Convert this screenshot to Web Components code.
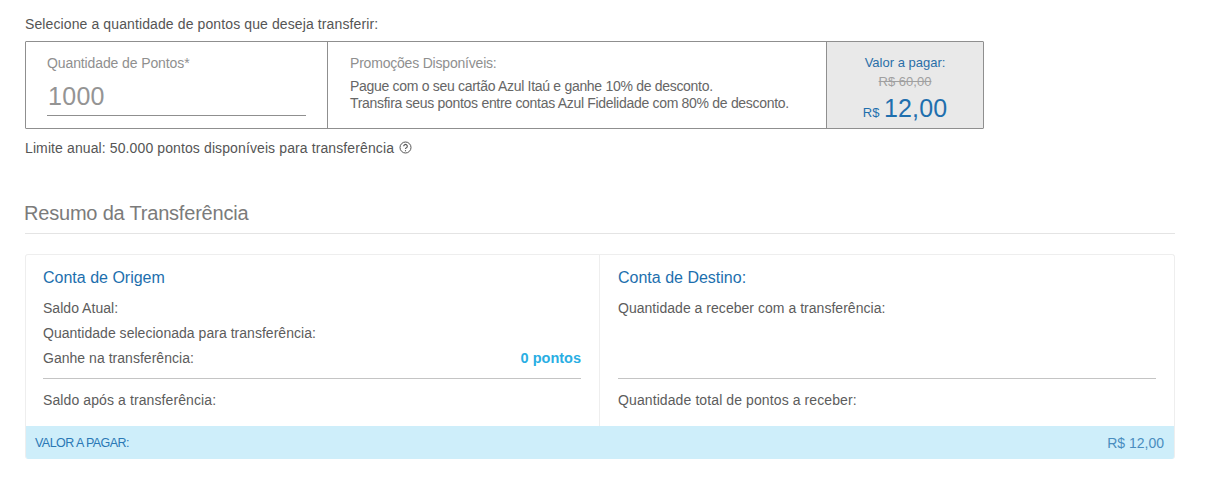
<!DOCTYPE html>
<html lang="pt"><head><meta charset="utf-8"><title>Transferência</title>
<style>html,body{margin:0;background:#fff}body{font-family:"Liberation Sans",Arial,sans-serif;color:#555}</style></head>
<body>
<transfer-page>
  <points-selector></points-selector>
  <transfer-summary></transfer-summary>
</transfer-page>
<script>
function def(name, html){
  customElements.define(name, class extends HTMLElement{
    constructor(){super();this.attachShadow({mode:'open'}).innerHTML=html;}
  });
}
def('transfer-page',`<style>:host{display:block;width:1150px;padding:16px 0 0 25px;box-sizing:content-box}</style><slot></slot>`);
def('points-selector',`<style>
:host{display:block;font-size:14px;color:#555;letter-spacing:.11px}
p{margin:0;line-height:17px}
.box{display:grid;grid-template-columns:301px 499px 1fr;width:959px;height:88px;box-sizing:border-box;border:1px solid #8f8f8f;margin-top:8px;border-radius:1px;letter-spacing:0}
.qty{padding:13px 21px 0 21px;box-sizing:border-box}
.lbl{font-size:14px;line-height:17px;color:#8f8f8f;letter-spacing:-.11px}
.promo .lbl{letter-spacing:-.2px}
.val{font-size:25px;line-height:29px;color:#949494;margin-top:10px;height:33px;border-bottom:1px solid #8f8f8f;letter-spacing:.3px;padding-left:1px}
.val span{display:block;height:29px}
.promo{border-left:1px solid #8f8f8f;padding:13px 22px 0 22px}
.promo .lines{margin-top:6px;font-size:14px;line-height:17px;color:#666;letter-spacing:-.3px}
.pay{border-left:1px solid #8f8f8f;background:#e9e9e9;text-align:center;padding-top:13px;color:#2a6fa8;box-sizing:border-box}
.pay .t{font-size:13px;line-height:16px}
.pay s{display:block;font-size:13px;line-height:16px;color:#a0a0a0;margin-top:3px}
.pay .p{font-size:13px;line-height:30px;margin-top:3px;color:#1f6fae}
.pay .p b{font-weight:400;font-size:25px;margin-left:1px;letter-spacing:.1px}
.lim{margin-top:11px;display:flex;align-items:center;gap:5px;line-height:17px}
svg{display:block;margin-top:-2px}
</style>
<p>Selecione a quantidade de pontos que deseja transferir:</p>
<div class="box">
  <div class="qty"><div class="lbl">Quantidade de Pontos*</div><div class="val"><span>1000</span></div></div>
  <div class="promo"><div class="lbl">Promoções Disponíveis:</div><div class="lines">Pague com o seu cartão Azul Itaú e ganhe 10% de desconto.<br>Transfira seus pontos entre contas Azul Fidelidade com 80% de desconto.</div></div>
  <div class="pay"><div class="t">Valor a pagar:</div><s>R$ 60,00</s><div class="p">R$ <b>12,00</b></div></div>
</div>
<div class="lim"><span>Limite anual: 50.000 pontos disponíveis para transferência</span>
<svg width="13" height="13" viewBox="0 0 13 13" fill="none" stroke="#555"><circle cx="6.5" cy="6.5" r="5.5"/><path d="M4.7 5.2a1.8 1.8 0 1 1 2.7 1.6c-.6.3-.9.6-.9 1.3" stroke-width="1.1"/><path d="M6.5 9.2v1.1" stroke-width="1.1"/></svg></div>`);
def('summary-col',`<style>
:host{display:flex;flex-direction:column;box-sizing:border-box;padding:13px 18px 0 18px;height:171px;font-size:14px;color:#5c5c5c}
:host([first]){padding-left:17px}
h3{margin:0;font-weight:400;font-size:16px;line-height:20px;color:#1d6fae}
.rows{height:82px;margin-top:8px;line-height:25px;letter-spacing:.03px}
hr{border:0;border-top:1px solid #c4c4c4;margin:0;height:0}
.foot{margin-top:9px;line-height:25px;letter-spacing:.1px}
</style><h3><slot name="title"></slot></h3><div class="rows"><slot name="rows"></slot></div><hr><div class="foot"><slot name="foot"></slot></div>`);
def('summary-row',`<style>:host{display:flex;justify-content:space-between;height:25px}
::slotted(b){color:#29aee3;font-weight:700;font-size:14.5px;letter-spacing:0}</style><slot></slot>`);
def('transfer-summary',`<style>
:host{display:block;margin-top:44px}
h2{margin:0;font-weight:400;font-size:20px;line-height:24px;color:#7b7b7b;letter-spacing:-.2px;padding-bottom:8px;border-bottom:1px solid #e4e4e4;text-indent:-1px}
.card{margin-top:20px;width:1150px;height:205px;box-sizing:border-box;border:1px solid #eeeeee;border-bottom:0;border-radius:3px;overflow:hidden;display:flex;flex-direction:column}
.cols{display:grid;grid-template-columns:573px 1fr}
.cols summary-col+summary-col{border-left:1px solid #eee}
.bar{height:33px;background:#ceeefa;display:flex;justify-content:space-between;align-items:center;padding:0 11px 0 10px;margin:0 -1px;color:#2a78b5;font-size:12.5px;letter-spacing:-.55px}
.bar span:last-child{letter-spacing:0;font-size:14px;color:#4a8dbf}
</style>
<h2>Resumo da Transferência</h2>
<div class="card"><div class="cols">
<summary-col first><span slot="title">Conta de Origem</span>
  <div slot="rows"><summary-row><span>Saldo Atual:</span></summary-row><summary-row><span>Quantidade selecionada para transferência:</span></summary-row><summary-row><span>Ganhe na transferência:</span><b>0 pontos</b></summary-row></div>
  <span slot="foot">Saldo após a transferência:</span></summary-col>
<summary-col><span slot="title">Conta de Destino:</span>
  <div slot="rows"><summary-row><span>Quantidade a receber com a transferência:</span></summary-row></div>
  <span slot="foot">Quantidade total de pontos a receber:</span></summary-col>
</div><div class="bar"><span>VALOR A PAGAR:</span><span>R$ 12,00</span></div></div>`);
</script>
</body></html>
